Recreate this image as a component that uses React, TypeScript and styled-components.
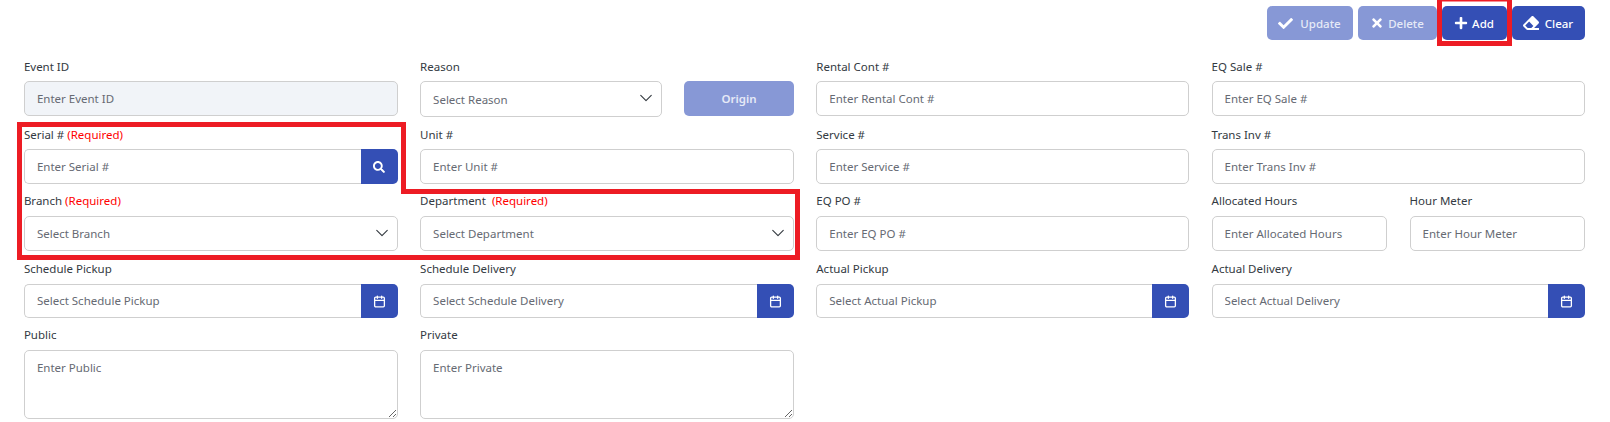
import React from "react";
import styled, { createGlobalStyle } from "styled-components";
import { FaCheck, FaTimes, FaPlus, FaEraser, FaSearch } from "react-icons/fa";
import { LuCalendar } from "react-icons/lu";

const Global = createGlobalStyle`
  html, body { margin: 0; padding: 0; background: #fff; overflow: hidden; }
  * { box-sizing: border-box; }
  body { font-family: "Noto Sans", "Open Sans", sans-serif; font-size: 12px; color: #333; }
  ::placeholder { color: #666a73; opacity: 1; }
`;

const Page = styled.div`
  position: relative;
  width: 1610px;
  height: 422px;
  padding: 6px 24px 0 23.9px;
`;

const Toolbar = styled.div`
  display: flex;
  justify-content: flex-end;
  gap: 5px;
  height: 34px;
  margin-bottom: 19px;
  padding-right: 1.5px;
`;

const ActionButton = styled.button<{ $w: number; $gap: number; $icon: number; $disabled?: boolean }>`
  width: ${(p) => p.$w}px;
  height: 34px;
  display: flex;
  align-items: center;
  justify-content: center;
  gap: ${(p) => p.$gap}px;
  border: 0;
  border-radius: 5px;
  padding: 0;
  background: ${(p) => (p.$disabled ? "#8798d6" : "#344fb5")};
  color: ${(p) => (p.$disabled ? "#e6eaf7" : "#fff")};
  font: 500 11.5px "Noto Sans", sans-serif;
  svg { font-size: ${(p) => p.$icon}px; flex: none; color: #fff; }
`;

const FormGrid = styled.div`
  display: grid;
  grid-template-columns: 373.9px 373.9px 373px 373.5px;
  grid-template-rows: 68px 67px 68px 66px 72px;
  column-gap: 22.3px;
`;

const Field = styled.div`
  display: flex;
  flex-direction: column;
  min-width: 0;
`;

const Pair = styled.div<{ $columns: string; $gap: number }>`
  display: grid;
  grid-template-columns: ${(p) => p.$columns};
  column-gap: ${(p) => p.$gap}px;
`;

const Label = styled.label<{ $lift?: number }>`
  display: block;
  flex: none;
  height: ${(p) => 22 + (p.$lift ?? 0)}px;
  margin-top: ${(p) => -(p.$lift ?? 0)}px;
  line-height: 16px;
  font-size: 11.5px;
  color: #333a42;
  white-space: pre;
`;

const Required = styled.span`
  color: #f00;
`;

const controlBase = `
  width: 100%;
  height: 35px;
  flex: none;
  border: 1px solid #cfcfcf;
  border-radius: 5px;
  padding: 0 12px;
  background-color: #fff;
  font: 400 11.5px "Noto Sans", sans-serif;
  color: #666a73;
  outline: none;
`;

const TextInput = styled.input<{ $grey?: boolean }>`
  ${controlBase}
  background-color: ${(p) => (p.$grey ? "#f1f4f8" : "#fff")};
`;

const Select = styled.select<{ $tall?: boolean }>`
  ${controlBase}
  height: ${(p) => (p.$tall ? 36 : 35)}px;
  padding-top: ${(p) => (p.$tall ? 1 : 0)}px;
  appearance: none;
  background-image: url("data:image/svg+xml,%3Csvg xmlns='http://www.w3.org/2000/svg' viewBox='0 0 16 16'%3E%3Cpath fill='none' stroke='%23343a40' stroke-linecap='round' stroke-linejoin='round' stroke-width='1.3' d='M2 5l6 6 6-6'/%3E%3C/svg%3E");
  background-repeat: no-repeat;
  background-position: right 8px top 9px;
  background-size: 14px 14px;
`;

const TextArea = styled.textarea`
  ${controlBase}
  height: 69px;
  padding-top: 9px;
  display: block;
  resize: vertical;
`;

const InputGroup = styled.div<{ $h: number }>`
  display: flex;
  height: ${(p) => p.$h}px;
  flex: none;
  ${TextInput} {
    flex: 1;
    height: 100%;
    min-width: 0;
    border-right: 0;
    border-radius: 5px 0 0 5px;
    padding-bottom: ${(p) => 35 - p.$h}px;
  }
`;

const AddonButton = styled.button`
  flex: none;
  width: 37px;
  height: 100%;
  display: flex;
  align-items: center;
  justify-content: center;
  border: 0;
  padding: 0;
  border-radius: 0 5px 5px 0;
  background: #344fb5;
  color: #fff;
  svg { flex: none; }
`;

const OriginButton = styled.button`
  height: 35px;
  border: 0;
  border-radius: 5px;
  padding: 0;
  background: #8798d6;
  color: #e6eaf7;
  font: 600 11.5px "Noto Sans", sans-serif;
`;

const Annotation = styled.svg`
  position: absolute;
  left: 0;
  top: 0;
  width: 1610px;
  height: 422px;
  pointer-events: none;
`;

function LabelText({ text, required, lift }: { text: string; required?: string; lift?: number }) {
  return (
    <Label $lift={lift}>
      {text}
      {required && <Required>{required}</Required>}
    </Label>
  );
}

function InputField({ label, placeholder, grey, lift }: { label: string; placeholder: string; grey?: boolean; lift?: number }) {
  return (
    <Field>
      <LabelText text={label} lift={lift} />
      <TextInput placeholder={placeholder} $grey={grey} />
    </Field>
  );
}

function DateField({ label }: { label: string }) {
  return (
    <Field>
      <LabelText text={label} lift={1} />
      <InputGroup $h={34}>
        <TextInput placeholder={`Select ${label}`} />
        <AddonButton aria-label="Pick date">
          <LuCalendar size={13} strokeWidth={2.4} />
        </AddonButton>
      </InputGroup>
    </Field>
  );
}

function SelectControl({ text, tall }: { text: string; tall?: boolean }) {
  return (
    <Select defaultValue="" $tall={tall}>
      <option value="">{text}</option>
    </Select>
  );
}

export default function App() {
  return (
    <Page>
      <Global />
      <Toolbar>
        <ActionButton $w={86} $gap={7} $icon={15} $disabled><FaCheck />Update</ActionButton>
        <ActionButton $w={79} $gap={4} $icon={14} $disabled><FaTimes />Delete</ActionButton>
        <ActionButton $w={65} $gap={4} $icon={14}><FaPlus />Add</ActionButton>
        <ActionButton $w={73} $gap={6} $icon={16}><FaEraser />Clear</ActionButton>
      </Toolbar>
      <FormGrid>
        <InputField label="Event ID" placeholder="Enter Event ID" grey />
        <Pair $columns="242px 109.9px" $gap={22}>
          <Field>
            <LabelText text="Reason" />
            <SelectControl text="Select Reason" tall />
          </Field>
          <Field>
            <Label />
            <OriginButton>Origin</OriginButton>
          </Field>
        </Pair>
        <InputField label="Rental Cont #" placeholder="Enter Rental Cont #" />
        <InputField label="EQ Sale #" placeholder="Enter EQ Sale #" />

        <Field>
          <LabelText text="Serial # " required="(Required)" />
          <InputGroup $h={35}>
            <TextInput placeholder="Enter Serial #" />
            <AddonButton aria-label="Search"><FaSearch size={12} /></AddonButton>
          </InputGroup>
        </Field>
        <InputField label="Unit #" placeholder="Enter Unit #" />
        <InputField label="Service #" placeholder="Enter Service #" />
        <InputField label="Trans Inv #" placeholder="Enter Trans Inv #" />

        <Field>
          <LabelText text="Branch " required="(Required)" lift={1} />
          <SelectControl text="Select Branch" />
        </Field>
        <Field>
          <LabelText text="Department  " required="(Required)" lift={1} />
          <SelectControl text="Select Department" />
        </Field>
        <InputField label="EQ PO #" placeholder="Enter EQ PO #" lift={1} />
        <Pair $columns="175px 175.5px" $gap={23}>
          <InputField label="Allocated Hours" placeholder="Enter Allocated Hours" lift={1} />
          <InputField label="Hour Meter" placeholder="Enter Hour Meter" lift={1} />
        </Pair>

        <DateField label="Schedule Pickup" />
        <DateField label="Schedule Delivery" />
        <DateField label="Actual Pickup" />
        <DateField label="Actual Delivery" />

        <Field>
          <LabelText text="Public" lift={1} />
          <TextArea placeholder="Enter Public" />
        </Field>
        <Field>
          <LabelText text="Private" lift={1} />
          <TextArea placeholder="Enter Private" />
        </Field>
      </FormGrid>
      <Annotation viewBox="0 0 1610 422" fill="none" stroke="#ed1c24" strokeWidth={5}>
        <path d="M19.5 124.5H403.5V191.5H797.5V257.5H19.5Z" />
        <path d="M1439.5 -1V43.5H1509.5V-1Z" />
      </Annotation>
    </Page>
  );
}
